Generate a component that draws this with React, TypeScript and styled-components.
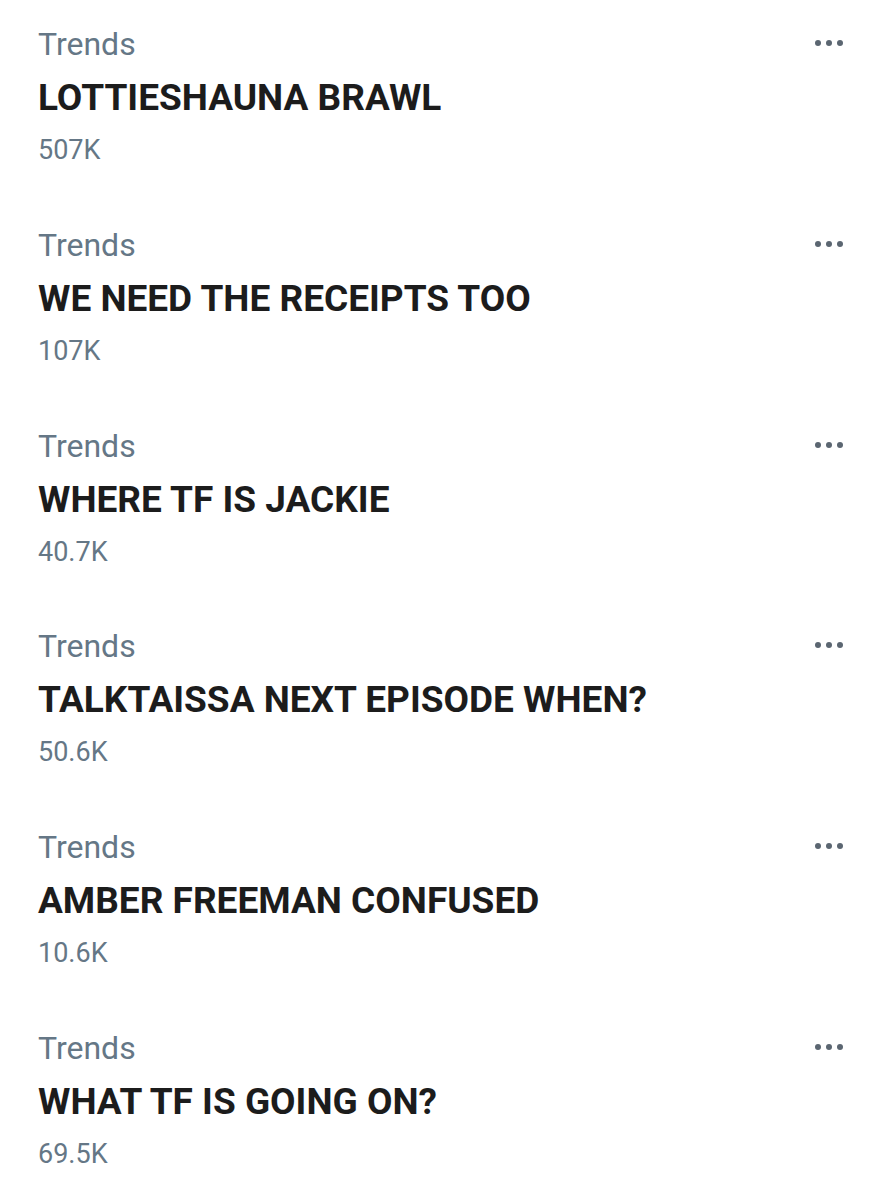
import React from "react";
import styled, { createGlobalStyle } from "styled-components";

const Global = createGlobalStyle`
  html, body { margin: 0; padding: 0; background: #fff; }
  body { font-family: Roboto, "Noto Sans", sans-serif; }
`;

const List = styled.div`
  display: flex;
  flex-direction: column;
  padding: 22px 0 0 38px;
  width: 885px;
  box-sizing: border-box;
`;

const Item = styled.div`
  position: relative;
  height: 200.8px;
  display: flex;
  flex-direction: column;
`;

const Label = styled.div`
  font-size: 32px;
  line-height: 44px;
  color: #657786;
`;

const Title = styled.div`
  font-size: 37px;
  font-weight: 700;
  line-height: 64px;
  color: #1c1c1c;
`;

const Count = styled.div`
  font-size: 27px;
  line-height: 40px;
  color: #657786;
`;

const More = styled.div`
  position: absolute;
  top: 18px;
  right: 42px;
  display: flex;
  gap: 5px;
`;

const Dot = styled.span`
  width: 6px;
  height: 6px;
  border-radius: 50%;
  background: #5b6671;
`;

const trends = [
  ["LOTTIESHAUNA BRAWL", "507K"],
  ["WE NEED THE RECEIPTS TOO", "107K"],
  ["WHERE TF IS JACKIE", "40.7K"],
  ["TALKTAISSA NEXT EPISODE WHEN?", "50.6K"],
  ["AMBER FREEMAN CONFUSED", "10.6K"],
  ["WHAT TF IS GOING ON?", "69.5K"],
];

export default function App() {
  return (
    <>
      <Global />
      <List>
        {trends.map(([t, c]) => (
          <Item key={t}>
            <Label>Trends</Label>
            <Title>{t}</Title>
            <Count>{c}</Count>
            <More>
              <Dot />
              <Dot />
              <Dot />
            </More>
          </Item>
        ))}
      </List>
    </>
  );
}
